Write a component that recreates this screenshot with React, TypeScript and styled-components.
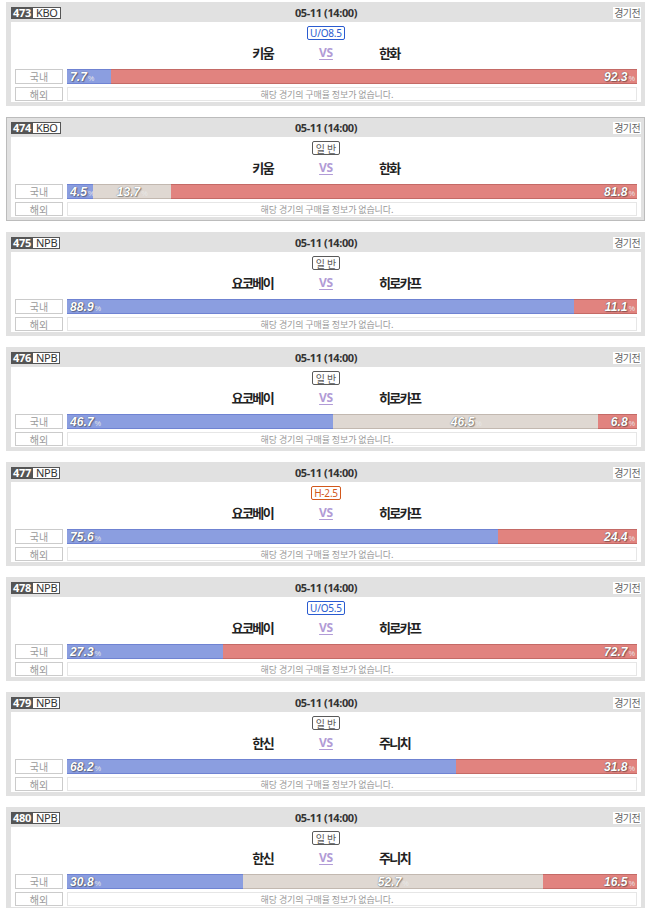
import * as React from 'react';
import styled, { createGlobalStyle } from 'styled-components';

const GlobalStyle = createGlobalStyle`
  body {
    margin: 0;
    background: #fff;
    font-family: "Noto Sans", "Noto Sans CJK KR", sans-serif;
  }
`;

type BetKind = 'normal' | 'uo' | 'handi';

interface Game {
  no: number;
  league: string;
  betKind: BetKind;
  betLabel: string;
  home: string;
  away: string;
  win: number;
  draw?: number;
  lose: number;
  selected?: boolean;
}

const games: Game[] = [
  { no: 473, league: 'KBO', betKind: 'uo', betLabel: 'U/O8.5', home: '키움', away: '한화', win: 7.7, lose: 92.3 },
  { no: 474, league: 'KBO', betKind: 'normal', betLabel: '일반', home: '키움', away: '한화', win: 4.5, draw: 13.7, lose: 81.8, selected: true },
  { no: 475, league: 'NPB', betKind: 'normal', betLabel: '일반', home: '요코베이', away: '히로카프', win: 88.9, lose: 11.1 },
  { no: 476, league: 'NPB', betKind: 'normal', betLabel: '일반', home: '요코베이', away: '히로카프', win: 46.7, draw: 46.5, lose: 6.8 },
  { no: 477, league: 'NPB', betKind: 'handi', betLabel: 'H-2.5', home: '요코베이', away: '히로카프', win: 75.6, lose: 24.4 },
  { no: 478, league: 'NPB', betKind: 'uo', betLabel: 'U/O5.5', home: '요코베이', away: '히로카프', win: 27.3, lose: 72.7 },
  { no: 479, league: 'NPB', betKind: 'normal', betLabel: '일반', home: '한신', away: '주니치', win: 68.2, lose: 31.8 },
  { no: 480, league: 'NPB', betKind: 'normal', betLabel: '일반', home: '한신', away: '주니치', win: 30.8, draw: 52.7, lose: 16.5 },
];

const betColors: Record<BetKind, string> = {
  normal: '#5a5a5a',
  uo: '#2a5bd0',
  handi: '#d2581c',
};

const List = styled.div`
  padding: 2px 5px 0 6px;
`;

const Card = styled.div<{ $selected?: boolean }>`
  background: #e1e1e1;
  padding: 0 4px 4px 5px;
  margin-bottom: 11px;
  outline: ${(p) => (p.$selected ? '1px solid #bcbcbc' : 'none')};
  outline-offset: -1px;
`;

const Header = styled.div`
  height: 20px;
  box-sizing: border-box;
  padding-top: 5px;
  display: grid;
  grid-template-columns: 1fr auto 1fr;
  align-items: start;
`;

const NoBadge = styled.div`
  justify-self: start;
  display: flex;
  height: 12px;
  font-size: 11px;
  line-height: 12px;
  font-family: "Noto Sans", sans-serif;
`;

const NoPart = styled.span`
  background: #555;
  color: #fff;
  font-weight: bold;
  padding: 0 2px 0 2px;
  letter-spacing: -0.3px;
`;

const LeaguePart = styled.span`
  background: #fff;
  color: #333;
  border: 1px solid #555;
  border-left: none;
  box-sizing: border-box;
  line-height: 10px;
  padding: 0 2px 0 3px;
  letter-spacing: -0.3px;
`;

const DateText = styled.div`
  font-size: 11px;
  line-height: 12px;
  font-weight: bold;
  color: #333;
  letter-spacing: -0.4px;
`;

const Status = styled.div`
  justify-self: end;
  background: #fff;
  color: #666;
  font-family: "Noto Sans CJK KR", sans-serif;
  font-size: 10px;
  line-height: 12px;
  padding: 0 1px;
  letter-spacing: -0.6px;
`;

const Body = styled.div`
  background: #fff;
  padding: 4px 4px 1px 4px;
`;

const BetRow = styled.div`
  height: 14px;
  display: flex;
  justify-content: center;
`;

const BetBadge = styled.span<{ $color: string; $spaced?: boolean }>`
  display: inline-flex;
  align-items: center;
  height: 14px;
  box-sizing: border-box;
  border: 1px solid ${(p) => p.$color};
  border-radius: 2px;
  color: ${(p) => p.$color};
  padding: ${(p) => (p.$spaced ? '0 1px 0 3px' : '0 2px')};
  font-size: 10px;
  letter-spacing: ${(p) => (p.$spaced ? '2px' : '-0.2px')};
  font-family: "Noto Sans", "Noto Sans CJK KR", sans-serif;
`;

const Teams = styled.div`
  height: 24px;
  display: grid;
  grid-template-columns: 1fr 106px 1fr;
  align-items: center;
  margin-bottom: 5px;
`;

const Team = styled.div<{ $side: 'left' | 'right' }>`
  text-align: ${(p) => p.$side};
  font-family: "Noto Sans CJK KR", sans-serif;
  font-size: 13px;
  font-weight: bold;
  color: #222;
  letter-spacing: -1.6px;
`;

const Vs = styled.div`
  text-align: center;
  font-size: 12px;
  font-weight: bold;
  color: #b19bd6;
  text-decoration: underline;
  text-underline-offset: 2px;
  letter-spacing: -0.3px;
`;

const Row = styled.div<{ $h: number }>`
  display: flex;
  gap: 4px;
  height: ${(p) => p.$h}px;
  & + & {
    margin-top: 3px;
  }
`;

const Label = styled.div`
  width: 48px;
  flex: none;
  box-sizing: border-box;
  border: 1px solid #cbcbcb;
  color: #9a9a9a;
  font-family: "Noto Sans CJK KR", sans-serif;
  font-size: 10px;
  display: flex;
  align-items: center;
  justify-content: center;
`;

const Bar = styled.div`
  flex: 1;
  display: flex;
  overflow: hidden;
`;

const segColors = {
  win: ['#8b9ee0', '#6f83d2'],
  draw: ['#dfd8d2', '#c2b8b0'],
  lose: ['#e1837f', '#c46a66'],
};

const Segment = styled.div<{ $kind: 'win' | 'draw' | 'lose' }>`
  flex: none;
  box-sizing: border-box;
  background: ${(p) => segColors[p.$kind][0]};
  border-top: 1px solid ${(p) => segColors[p.$kind][1]};
  border-bottom: 1px solid ${(p) => segColors[p.$kind][1]};
  display: flex;
  align-items: center;
  justify-content: ${(p) => (p.$kind === 'win' ? 'flex-start' : p.$kind === 'draw' ? 'center' : 'flex-end')};
  padding: 0 2px 0 3px;
  white-space: nowrap;
`;

const Pct = styled.span`
  font-family: "Liberation Sans", sans-serif;
  font-size: 12px;
  font-weight: bold;
  font-style: italic;
  color: #fff;
  text-shadow: 0 0 1px rgba(60, 60, 60, 0.9), 1px 1px 1px rgba(0, 0, 0, 0.35);
  letter-spacing: 0.1px;
`;

const PctSign = styled.span`
  font-size: 7px;
  font-style: normal;
  color: #e8e8e8;
  margin-left: 1px;
  text-shadow: none;
  font-weight: normal;
`;

const Info = styled.div`
  flex: 1;
  box-sizing: border-box;
  border: 1px solid #e6e6e6;
  padding-right: 50px;
  color: #9a9a9a;
  font-family: "Noto Sans CJK KR", sans-serif;
  font-size: 9px;
  letter-spacing: -0.1px;
  display: flex;
  align-items: center;
  justify-content: center;
`;

function Value({ v }: { v: number }) {
  return (
    <Pct>
      {v.toFixed(1)}
      <PctSign>%</PctSign>
    </Pct>
  );
}

function GameCard({ game }: { game: Game }) {
  return (
    <Card $selected={game.selected}>
      <Header>
        <NoBadge>
          <NoPart>{game.no}</NoPart>
          <LeaguePart>{game.league}</LeaguePart>
        </NoBadge>
        <DateText>05-11 (14:00)</DateText>
        <Status>경기전</Status>
      </Header>
      <Body>
        <BetRow>
          <BetBadge $color={betColors[game.betKind]} $spaced={game.betKind === 'normal'}>
            {game.betLabel}
          </BetBadge>
        </BetRow>
        <Teams>
          <Team $side='right'>{game.home}</Team>
          <Vs>VS</Vs>
          <Team $side='left'>{game.away}</Team>
        </Teams>
        <Row $h={15}>
          <Label>국내</Label>
          <Bar>
            <Segment $kind='win' style={{ width: `${game.win}%` }}>
              <Value v={game.win} />
            </Segment>
            {game.draw !== undefined && (
              <Segment $kind='draw' style={{ width: `${game.draw}%` }}>
                <Value v={game.draw} />
              </Segment>
            )}
            <Segment $kind='lose' style={{ width: `${game.lose}%` }}>
              <Value v={game.lose} />
            </Segment>
          </Bar>
        </Row>
        <Row $h={14}>
          <Label>해외</Label>
          <Info>해당 경기의 구매율 정보가 없습니다.</Info>
        </Row>
      </Body>
    </Card>
  );
}

export default function App() {
  return (
    <>
      <GlobalStyle />
      <List>
        {games.map((g) => (
          <GameCard key={g.no} game={g} />
        ))}
      </List>
    </>
  );
}
